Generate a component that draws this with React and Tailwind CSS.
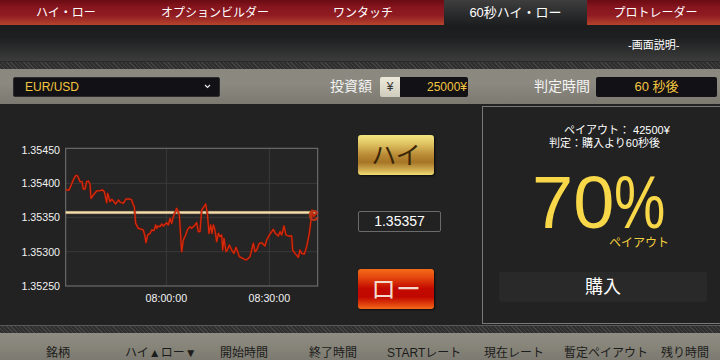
export default function App() {
  const tabs = [
    { t: "ハイ・ロー", c: "w-[148px] pr-[16px] text-[12px]", a: false },
    { t: "オプションビルダー", c: "w-[148px] pr-[14px] text-[12px]", a: false },
    { t: "ワンタッチ", c: "w-[148px] pr-[14px] text-[12px]", a: false },
    { t: "60秒ハイ・ロー", c: "w-[143px] text-[13px]", a: true },
    { t: "プロトレーダー", c: "w-[133px] pl-[4px] text-[12px]", a: false },
  ];
  const pts =
    "197,240 207,240 215,222 222,205 228,196 233,198 240,215 246,215 250,237 255,237 260,215 265,213 270,222 273,265 280,255 290,243 300,242 308,240 313,245 320,278 323,250 330,275 335,268 342,275 347,282 355,270 360,276 370,280 378,267 390,267 395,270 400,285 403,290 407,340 415,355 425,358 430,360 435,380 438,398 443,375 450,370 455,360 462,362 467,345 470,355 475,348 480,350 485,342 490,348 500,338 505,345 510,325 515,340 520,320 530,295 538,315 545,425 550,390 557,375 563,358 570,350 575,355 585,345 590,338 595,365 600,365 605,300 612,290 617,282 622,310 627,370 632,345 636,370 640,345 645,360 650,395 655,370 660,380 665,375 668,420 672,385 678,425 682,420 688,405 695,420 702,430 708,412 713,425 718,440 728,445 738,450 745,445 750,440 755,420 760,400 765,425 770,420 778,400 785,398 795,408 800,390 810,372 820,358 826,370 835,378 840,365 845,375 852,348 858,375 865,378 875,378 878,420 885,430 895,442 900,420 905,430 913,432 920,410 928,370 933,330 936,300 940,320 945,315 950,310";
  const heads = [
    { t: "銘柄", c: "w-[79px]" },
    { t: "ハイ▲ロー▼", c: "w-[95px]" },
    { t: "開始時間", c: "w-[89px]" },
    { t: "終了時間", c: "w-[78px]" },
    { t: "STARTレート", c: "w-[97px]" },
    { t: "現在レート", c: "w-[80px]" },
    { t: "暫定ペイアウト", c: "w-[97px]" },
    { t: "残り時間", c: "w-[59px]" },
  ];
  return (
    <div className="w-[720px] h-[360px] overflow-hidden bg-[#222222] font-['Liberation_Sans','Noto_Sans_CJK_JP',sans-serif] text-white">
      {/* tabs */}
      <div className="flex h-[25px]">
        {tabs.map((tb) => (
          <div
            key={tb.t}
            className={
              tb.a
                ? `${tb.c} flex items-center justify-center text-white bg-linear-to-b from-[#3e3e3e] to-[#1d1e20]`
                : `${tb.c} flex items-center justify-center text-white bg-[linear-gradient(to_bottom,#6a0b12_0%,#88161f_30%,#8f1b22_60%,#b5442c_100%)]`
            }
          >
            {tb.t}
          </div>
        ))}
      </div>
      {/* dark band */}
      <div className="h-[36px] bg-[linear-gradient(to_bottom,#1b1c1e_0%,#1e1f21_35%,#3c3c3c_100%)] flex">
        <div className="ml-[628px] mt-[13px] text-[11px] leading-[14px] text-white">-画面説明-</div>
      </div>
      {/* texture */}
      <div className="h-[8px] bg-[#383838] bg-[repeating-linear-gradient(45deg,#444444_0px,#444444_1px,#2f2f2f_1px,#2f2f2f_3px)] border-t border-[#2a2a2a]"></div>
      {/* grey controls bar */}
      <div className="h-[35px] flex items-center bg-[linear-gradient(to_bottom,#8a887f_0%,#8b8980_40%,#7b7970_100%)]">
        <div className="ml-[13px] w-[207px] h-[20px] rounded-[2px] bg-[#121116] border border-[#2c2b2e] flex items-center justify-between pl-[11px] pr-[8px]">
          <span className="text-[12px] text-[#f2c640]">EUR/USD</span>
          <svg width="7" height="5" viewBox="0 0 7 5">
            <path d="M1 1 L3.5 3.5 L6 1" stroke="#e8e8e8" strokeWidth="1.2" fill="none" />
          </svg>
        </div>
        <div className="ml-[100px] w-[60px] text-right pr-[8px] text-[14px] text-[#f4f4f4]">投資額</div>
        <div className="w-[20px] h-[20px] rounded-l-[2px] bg-linear-to-b from-[#eeeadc] to-[#cfcbbd] flex items-center justify-center text-[12px] text-[#333]">¥</div>
        <div className="w-[68px] h-[20px] bg-[#121116] rounded-r-[2px] flex items-center justify-end pr-[1px] text-[12px] text-[#f2c640]">25000¥</div>
        <div className="w-[128px] text-right pr-[6px] text-[14px] text-[#f4f4f4]">判定時間</div>
        <div className="w-[121px] h-[20px] rounded-[2px] bg-[#121116] flex items-center justify-center text-[13px] text-[#f2c640]">60 秒後</div>
      </div>
      {/* main */}
      <div className="h-[221px] flex bg-[#222222]">
        <div className="w-[340px] pt-[6px]">
          <svg width="340" height="215" viewBox="0 0 1020 645" className="block">
            <rect x="197" y="115" width="756" height="413" fill="#252525" />
            <line x1="197" y1="220" x2="953" y2="220" stroke="#3a3a3a" strokeWidth="3" />
            <line x1="197" y1="322" x2="953" y2="322" stroke="#3a3a3a" strokeWidth="3" />
            <line x1="197" y1="425" x2="953" y2="425" stroke="#3a3a3a" strokeWidth="3" />
            <line x1="499" y1="115" x2="499" y2="528" stroke="#3a3a3a" strokeWidth="3" />
            <line x1="808" y1="115" x2="808" y2="528" stroke="#3a3a3a" strokeWidth="3" />
            <rect x="197" y="115" width="756" height="413" fill="none" stroke="#6c6c6c" strokeWidth="3.5" />
            <rect x="197" y="302" width="753" height="11" fill="#7a6a4a" opacity="0.5" />
            <rect x="197" y="304" width="753" height="7" fill="#f6dfad" />
            <polyline points={pts} fill="none" stroke="#7a1000" strokeWidth="8" strokeLinejoin="round" opacity="0.5" />
            <polyline points={pts} fill="none" stroke="#d8290b" strokeWidth="4" strokeLinejoin="round" />
            <text x="924" y="333" fontSize="58" fontWeight="bold" fill="#b8341b" fontFamily="Liberation Sans, sans-serif">c</text>
            <g fill="#f2f2f2" fontSize="32" fontFamily="Liberation Sans, sans-serif" textAnchor="end">
              <text x="180" y="132">1.35450</text>
              <text x="180" y="232">1.35400</text>
              <text x="180" y="334">1.35350</text>
              <text x="180" y="437">1.35300</text>
              <text x="180" y="540">1.35250</text>
            </g>
            <g fill="#f2f2f2" fontSize="32" fontFamily="Liberation Sans, sans-serif" textAnchor="middle">
              <text x="499" y="577">08:00:00</text>
              <text x="808" y="577">08:30:00</text>
            </g>
          </svg>
        </div>
        <div className="w-[142px] pl-[18px] pt-[31px] flex flex-col">
          <div className="w-[76px] h-[40px] rounded-[3px] bg-[linear-gradient(to_bottom,#f2e57f_0%,#e2c765_20%,#b98a35_50%,#a67526_68%,#d2ae52_88%,#f2de76_100%)] flex items-center justify-center text-[25px] leading-none text-[#3b2708] shadow-[1px_1px_2px_rgba(0,0,0,0.7)]">
            ハイ
          </div>
          <div className="mt-[36px] w-[83px] h-[21px] border border-[#6b6b6b] rounded-[2px] flex items-center justify-center text-[14px] text-white">
            1.35357
          </div>
          <div className="mt-[37px] w-[76px] h-[40px] rounded-[3px] bg-[linear-gradient(to_bottom,#f46c1a_0%,#e4460f_22%,#c40a00_48%,#c00800_70%,#e0400e_88%,#f36a1a_100%)] flex items-center justify-center text-[25px] leading-none text-[#f4dccd] shadow-[1px_1px_2px_rgba(0,0,0,0.7)]">
            ロー
          </div>
        </div>
        <div className="w-[238px] mt-[2px] h-[218px] border-l border-t border-b border-[#787878] flex flex-col">
          <div className="pt-[17px] pl-[81px] text-[11px] leading-[13px] text-white">ペイアウト： 42500¥</div>
          <div className="pl-[66px] text-[11px] leading-[13px] text-white">判定：購入より60秒後</div>
          <div className="mt-[21px] pl-[49px] h-[64px] text-[74px] leading-[64px] text-[#f8d848] font-['Liberation_Sans',sans-serif] whitespace-nowrap">
            70<span className="inline-block scale-x-[0.78] origin-left">%</span>
          </div>
          <div className="pl-[126px] text-[12px] leading-[16px] text-[#f2cf3c]">ペイアウト</div>
          <div className="mt-[21px] ml-[16px] w-[208px] h-[30px] rounded-[2px] bg-[#292929] flex items-center justify-center text-[18px] text-white">
            購入
          </div>
        </div>
      </div>
      {/* texture */}
      <div className="h-[8px] bg-[#383838] bg-[repeating-linear-gradient(45deg,#444444_0px,#444444_1px,#2f2f2f_1px,#2f2f2f_3px)] border-t border-[#5a5a5a]"></div>
      {/* bottom header */}
      <div className="h-[27px] bg-[linear-gradient(to_bottom,#8e8c83_0%,#878579_50%,#7c7a71_100%)] flex pl-[46px] pt-[12px]">
        {heads.map((h) => (
          <div key={h.t} className={`${h.c} text-[12px] leading-[16px] text-[#1c1c1c] whitespace-nowrap`}>
            {h.t}
          </div>
        ))}
      </div>
    </div>
  );
}
